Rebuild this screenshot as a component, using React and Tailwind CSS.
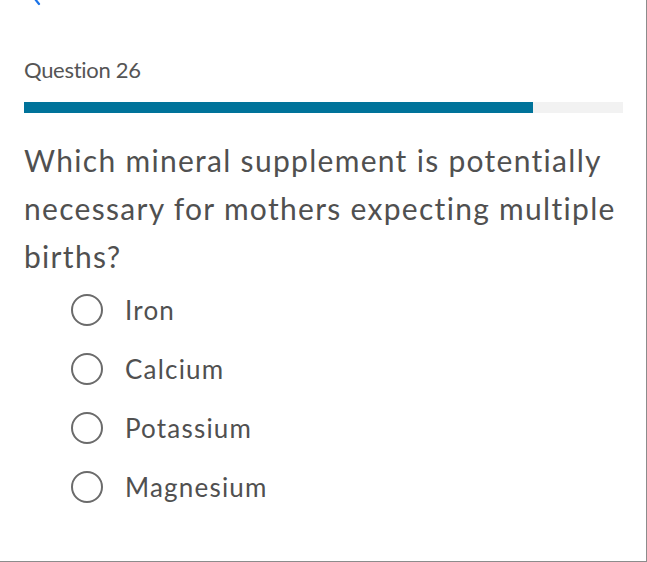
export default function App() {
  const options = ['Iron', 'Calcium', 'Potassium', 'Magnesium'];

  return (
    <div
      className="relative h-[562px] w-[647px] overflow-hidden border-r border-b border-[#8c8c8c] bg-white"
      style={{ fontFamily: 'Lato, "Open Sans", sans-serif' }}
    >
      <svg className="absolute left-[28px] top-[-18px]" width="14" height="24" viewBox="0 0 14 24" fill="none">
        <path d="M11 2 L3 12 L11 22" stroke="#1a73e8" strokeWidth="2.2" strokeLinecap="round" strokeLinejoin="round" />
      </svg>

      <div className="pl-[24px] pr-[23px] pt-[56px]">
        <h2 className="text-[22px] leading-[28px] tracking-[-0.3px] text-[#555555]">Question 26</h2>

        <div className="mt-[18px] h-[11px] w-full bg-[#f2f2f2]">
          <div className="h-full w-[85%] bg-[#00739a]" />
        </div>

        <p className="mt-[23px] text-[30px] leading-[48px] tracking-[1.3px] text-[#505050]">
          Which mineral supplement is potentially necessary for mothers expecting multiple births?
        </p>

        <div className="mt-[14px] flex flex-col gap-[27px] pl-[47px]">
          {options.map((o) => (
            <label key={o} className="flex h-[32px] items-center gap-[22px]">
              <span className="h-[32px] w-[32px] shrink-0 rounded-full border-[2.5px] border-[#6b6b6b]" />
              <span className="text-[26px] leading-[32px] tracking-[1.2px] text-[#505050]">{o}</span>
            </label>
          ))}
        </div>
      </div>
    </div>
  );
}
